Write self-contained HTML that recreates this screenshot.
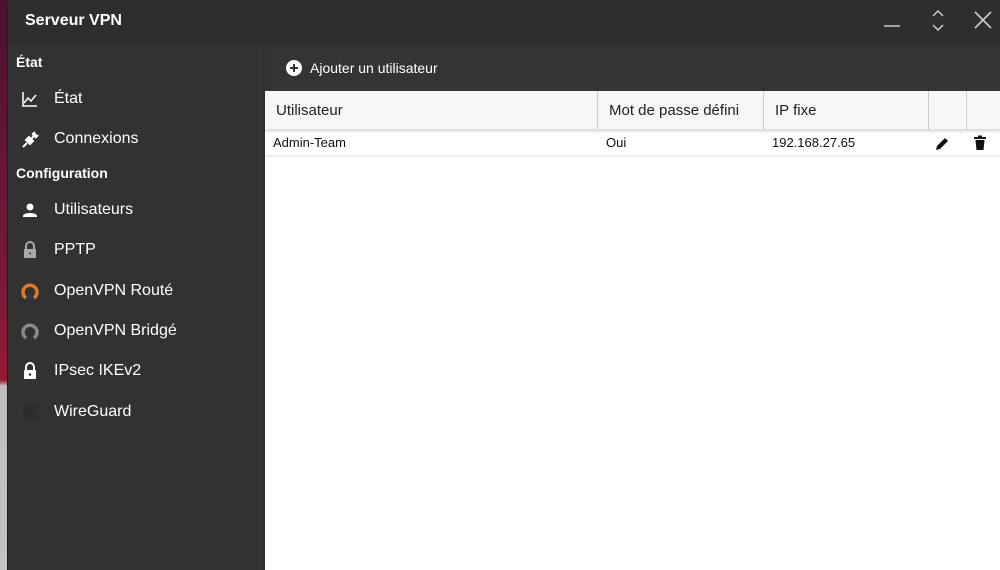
<!DOCTYPE html>
<html><head><meta charset="utf-8"><style>
*{margin:0;padding:0;box-sizing:border-box}
body{width:1000px;height:570px;overflow:hidden;background:#2e2e2e;font-family:"Liberation Sans",sans-serif;position:relative}
.strip{position:absolute;left:0;top:0;width:7px;height:570px;background:linear-gradient(#4a1230 0,#7a1a3a 300px,#9a1830 380px,#bdbdbd 386px,#c4c4c4 570px)}
.win{position:absolute;left:7px;top:0;width:993px;height:570px;background:#2e2e2e;border-left:1px solid #1e1e1e;border-top-left-radius:6px}
.title{position:absolute;left:25px;top:12px;color:#fff;font-size:16px;font-weight:bold}
.side{position:absolute;left:8px;top:45px;width:255px;height:525px;background:#323232}
.sec{position:absolute;left:8px;color:#fff;font-weight:bold;font-size:14px}
.item{position:absolute;left:46px;color:#fff;font-size:16px}
.ic{position:absolute;left:12px;width:20px;height:20px}
.main{position:absolute;left:265px;top:45px;width:735px;height:525px;background:#fff}
.tb{position:absolute;left:0;top:0;width:735px;height:46px;background:#343434}
.tb span{position:absolute;left:45px;top:15px;color:#fff;font-size:14px}
.hd{position:absolute;top:46px;left:0;width:735px;height:39px;background:#f7f7f7;border-bottom:1px solid #ddd;box-shadow:0 2px 2px rgba(0,0,0,.12)}
.hd div{position:absolute;top:0;height:39px;border-right:1px solid #ccc;font-size:15px;color:#222;padding:11px 0 0 11px}
.row{position:absolute;top:86px;left:0;width:735px;height:26px;border-bottom:2px solid #eee;font-size:13px;color:#111}
.row span{position:absolute;top:4px}
</style></head><body>
<div class="strip"></div>
<div class="win"></div>
<div class="title">Serveur VPN</div>
<svg style="position:absolute;left:880px;top:0" width="120" height="45">
<line x1="4" y1="26" x2="20" y2="26" stroke="#ccc" stroke-width="1.5"/>
<polyline points="53,16 58,11 63,16" fill="none" stroke="#ccc" stroke-width="1.5"/>
<polyline points="53,25 58,30 63,25" fill="none" stroke="#ccc" stroke-width="1.5"/>
<path d="M95 12 L111 28 M111 12 L95 28" stroke="#ccc" stroke-width="1.6"/>
</svg>
<div class="side">
<div class="sec" style="top:9px">État</div>
<svg class="ic" style="top:44px" viewBox="0 0 20 20"><path d="M3 3V17H17" stroke="#fff" stroke-width="1.5" fill="none"/><path d="M4 14L8 9L11 12L16 6" stroke="#fff" stroke-width="1.5" fill="none"/></svg>
<div class="item" style="top:45px">État</div>
<svg class="ic" style="top:85px" viewBox="0 0 20 20"><path d="M3 17L7 13M9 7L13 11L10 14L6 10Z" stroke="#fff" stroke-width="2" fill="#fff"/><path d="M11 9L16 4M12 5L15 2M15 8L18 5" stroke="#fff" stroke-width="2"/></svg>
<div class="item" style="top:85px">Connexions</div>
<div class="sec" style="top:120px">Configuration</div>
<svg class="ic" style="top:155px" viewBox="0 0 20 20"><circle cx="10" cy="7" r="3.5" fill="#fff"/><path d="M3 16C3 12 17 12 17 16V17H3Z" fill="#fff"/></svg>
<div class="item" style="top:156px">Utilisateurs</div>
<svg class="ic" style="top:195px" viewBox="0 0 20 20"><path d="M6 9V6A4 4 0 0 1 14 6V9" stroke="#aaa" stroke-width="2" fill="none"/><rect x="4" y="9" width="12" height="9" rx="1" fill="#aaa"/><circle cx="10" cy="13.5" r="1.2" fill="#555"/></svg>
<div class="item" style="top:196px">PPTP</div>
<svg class="ic" style="top:236px" viewBox="0 0 20 20"><path d="M6 17A7 7 0 1 1 14 17" stroke="#e07a26" stroke-width="3.5" fill="none"/><path d="M9 12H11V18H9Z" fill="#1c3d6e"/></svg>
<div class="item" style="top:237px">OpenVPN Routé</div>
<svg class="ic" style="top:276px" viewBox="0 0 20 20"><path d="M6 17A7 7 0 1 1 14 17" stroke="#888" stroke-width="3.5" fill="none"/></svg>
<div class="item" style="top:277px">OpenVPN Bridgé</div>
<svg class="ic" style="top:316px" viewBox="0 0 20 20"><path d="M6 9V6A4 4 0 0 1 14 6V9" stroke="#fff" stroke-width="2" fill="none"/><rect x="4" y="9" width="12" height="9" rx="1" fill="#fff"/><circle cx="10" cy="13.5" r="1.3" fill="#333"/></svg>
<div class="item" style="top:317px">IPsec IKEv2</div>
<svg class="ic" style="top:357px" viewBox="0 0 20 20"><circle cx="10" cy="10" r="7" fill="#2c2c2c"/></svg>
<div class="item" style="top:358px">WireGuard</div>
</div>
<div class="main">
<div class="tb"><svg style="position:absolute;left:21px;top:15px" width="16" height="16"><circle cx="8" cy="8" r="8" fill="#fff"/><path d="M8 4V12M4 8H12" stroke="#343434" stroke-width="2"/></svg><span>Ajouter un utilisateur</span></div>
<div class="hd">
<div style="left:0;width:333px">Utilisateur</div>
<div style="left:333px;width:166px">Mot de passe défini</div>
<div style="left:499px;width:165px">IP fixe</div>
<div style="left:664px;width:38px"></div>
</div>
<div class="row"><span style="left:8px">Admin-Team</span><span style="left:341px">Oui</span><span style="left:507px">192.168.27.65</span>
<svg style="position:absolute;left:669px;top:5px" width="16" height="16" viewBox="0 0 16 16"><path d="M2 14L3 10L11 2L14 5L6 13Z" fill="#111"/></svg>
<svg style="position:absolute;left:708px;top:4px" width="14" height="16" viewBox="0 0 14 16"><rect x="1" y="2" width="12" height="2" fill="#111"/><rect x="5" y="0.5" width="4" height="2" fill="#111"/><path d="M2.5 5H11.5L10.5 15H3.5Z" fill="#111"/></svg>
</div>
</div>
</body></html>
